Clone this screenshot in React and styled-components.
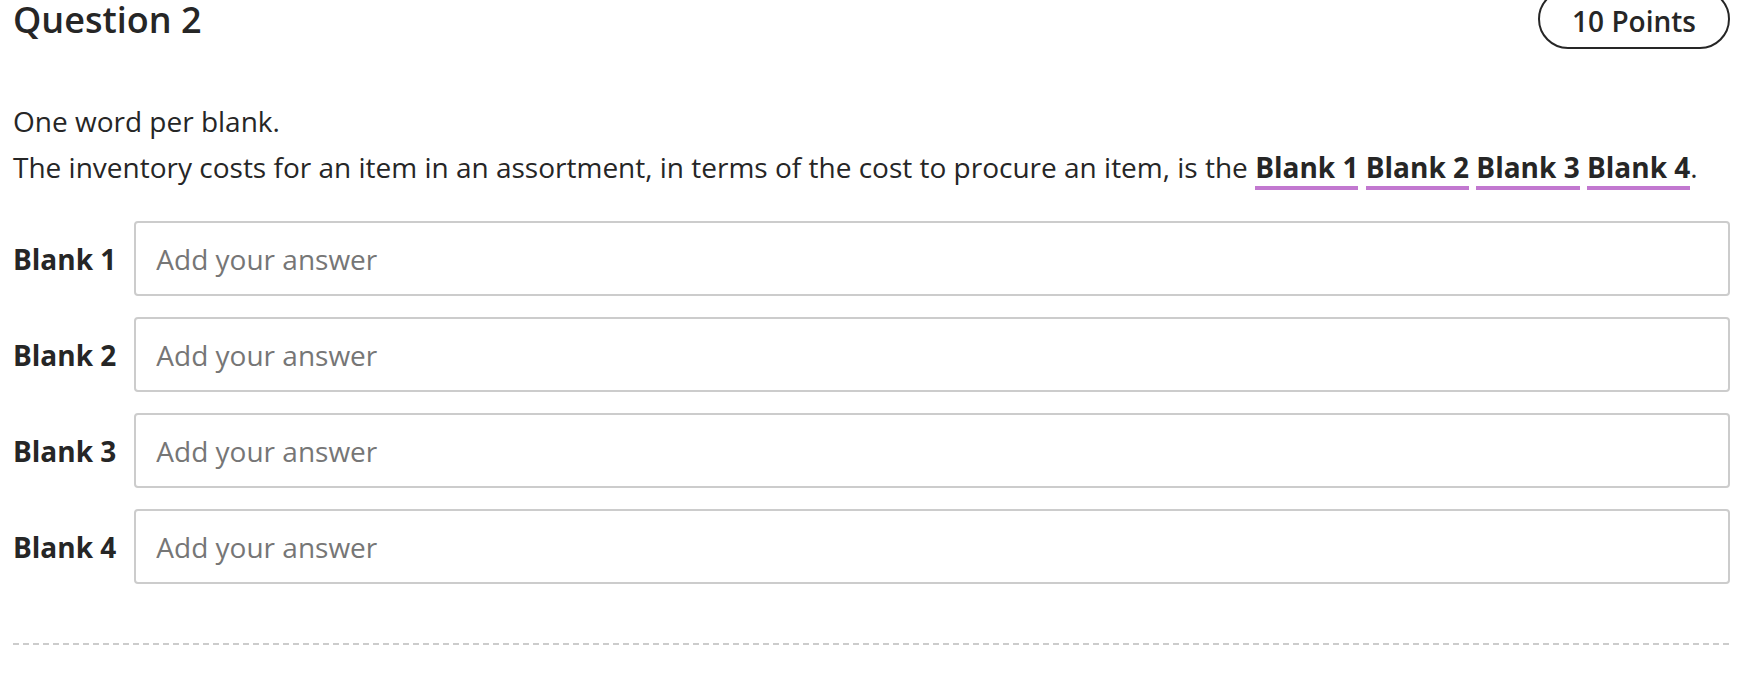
import React from "react";
import styled, { createGlobalStyle } from "styled-components";

const Global = createGlobalStyle`
  html, body { margin: 0; padding: 0; background: #fff; }
  body { font-family: "Open Sans", "Liberation Sans", sans-serif; color: #262626; }
`;

const Page = styled.div`
  padding: 0 32px 0 13px;
`;

const Header = styled.div`
  display: flex;
  justify-content: space-between;
  align-items: flex-start;
`;

const Title = styled.h2`
  margin: 0;
  font-size: 36px;
  font-weight: 600;
  line-height: 40px;
  color: #262626;
`;

const Points = styled.div`
  margin-top: -11px;
  border: 2px solid #262626;
  border-radius: 30px;
  height: 60px;
  box-sizing: border-box;
  padding: 3px 32px 0;
  display: flex;
  align-items: center;
  font-size: 28px;
  font-weight: 600;
  color: #262626;
`;

const Body = styled.div`
  margin-top: 49px;
  font-size: 28px;
  line-height: 46px;
`;

const Line = styled.div``;

const BlankRef = styled.b`
  font-weight: 700;
  display: inline-block;
  line-height: 38px;
  border-bottom: 4px solid #c278d0;
`;

const Blanks = styled.div`
  margin-top: 31px;
  display: grid;
  grid-template-columns: max-content 1fr;
  column-gap: 18px;
  row-gap: 21px;
  align-items: center;
`;

const Label = styled.label`
  font-size: 28px;
  font-weight: 700;
`;

const Input = styled.input`
  height: 75px;
  box-sizing: border-box;
  border: 2px solid #cccccc;
  border-radius: 4px;
  padding: 0 20px;
  font-family: "Open Sans", "Liberation Sans", sans-serif;
  font-size: 28px;
  color: #262626;
  outline: none;
  width: 100%;
  &::placeholder { color: #767676; opacity: 1; }
`;

const Divider = styled.div`
  margin-top: 59px;
  height: 2px;
  background-image: repeating-linear-gradient(to right, #cccccc 0 6px, transparent 6px 10px);
`;

export default function App() {
  const blanks = [1, 2, 3, 4];
  return (
    <>
      <Global />
      <Page>
        <Header>
          <Title>Question 2</Title>
          <Points>10 Points</Points>
        </Header>
        <Body>
          <Line>One word per blank.</Line>
          <Line>
            The inventory costs for an item in an assortment, in terms of the cost to procure an item, is the{" "}
            {blanks.map((n, i) => (
              <React.Fragment key={n}>
                <BlankRef>Blank {n}</BlankRef>
                {i < blanks.length - 1 ? " " : ""}
              </React.Fragment>
            ))}
            .
          </Line>
        </Body>
        <Blanks>
          {blanks.map((n) => (
            <React.Fragment key={n}>
              <Label htmlFor={`blank-${n}`}>Blank {n}</Label>
              <Input id={`blank-${n}`} placeholder="Add your answer" />
            </React.Fragment>
          ))}
        </Blanks>
        <Divider />
      </Page>
    </>
  );
}
